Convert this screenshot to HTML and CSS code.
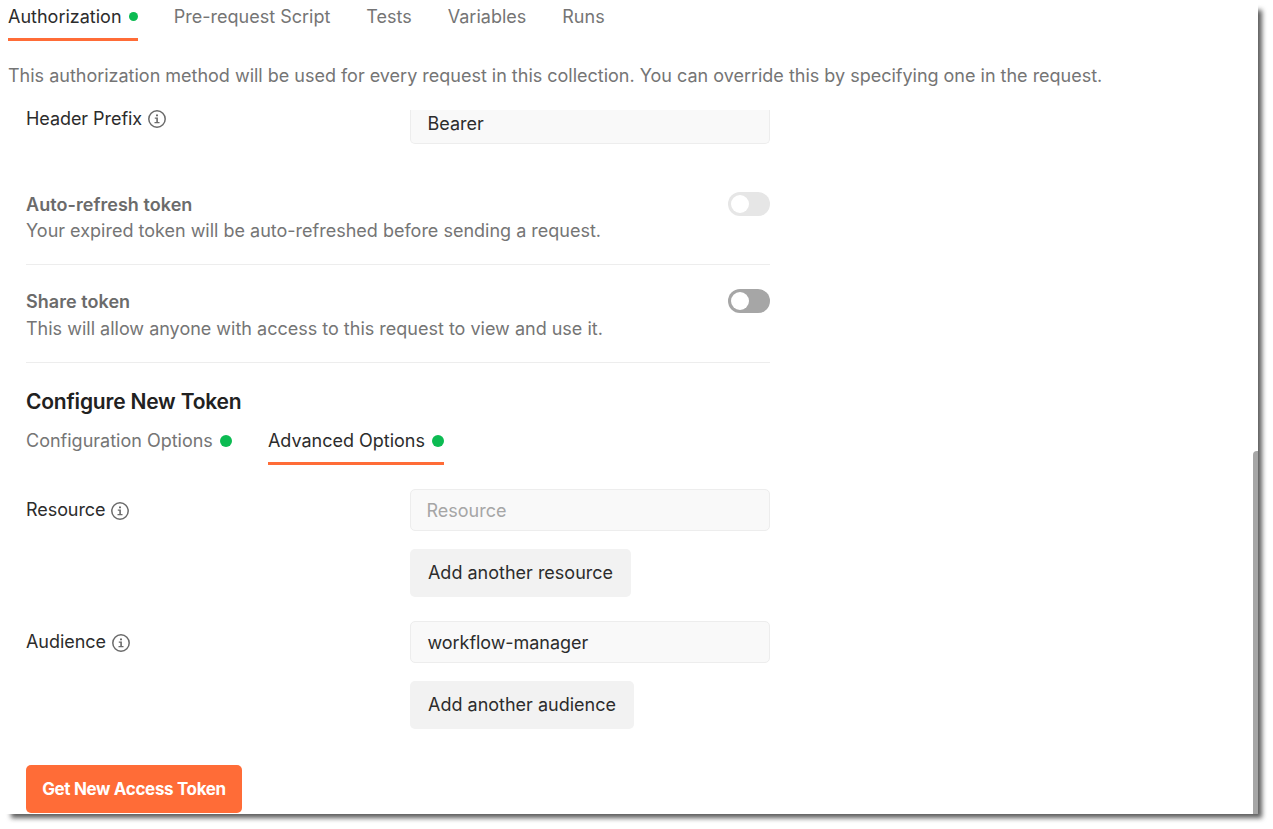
FILE: index.html
```html
<!DOCTYPE html>
<html lang="en">
<head>
<meta charset="utf-8">
<title>Authorization</title>
<link rel="stylesheet" href="styles.css">
</head>
<body>
<svg width="0" height="0" class="sprite">
  <symbol id="info" viewBox="0 0 18 18">
    <circle cx="9" cy="9" r="8.2" fill="none" stroke="currentColor" stroke-width="1.5"/>
    <path d="M8 4.4h2v1.8H8zM6.8 7.4h3.1v4.5h1.6v1.4H6.5v-1.4h1.8V8.8H6.8z" fill="currentColor"/>
  </symbol>
</svg>
<main class="panel">
  <nav class="tabs">
    <a class="tab active"><span>Authorization</span><i class="dot small"></i></a>
    <a class="tab">Pre-request Script</a>
    <a class="tab">Tests</a>
    <a class="tab">Variables</a>
    <a class="tab">Runs</a>
  </nav>
  <p class="description">This authorization method will be used for every request in this collection. You can override this by specifying one in the request.</p>
  <section class="settings">
    <div class="row prefix">
      <div class="label">Header Prefix<svg class="info"><use href="#info"/></svg></div>
      <div class="input">Bearer</div>
    </div>
    <div class="setting refresh">
      <div><h3>Auto-refresh token</h3><p>Your expired token will be auto-refreshed before sending a request.</p></div>
      <span class="toggle disabled"></span>
    </div>
    <div class="setting share">
      <div><h3>Share token</h3><p>This will allow anyone with access to this request to view and use it.</p></div>
      <span class="toggle"></span>
    </div>
    <h2>Configure New Token</h2>
    <nav class="tabs sub">
      <a class="tab"><span>Configuration Options</span><i class="dot"></i></a>
      <a class="tab active"><span>Advanced Options</span><i class="dot"></i></a>
    </nav>
    <div class="row">
      <div class="label">Resource<svg class="info"><use href="#info"/></svg></div>
      <div class="field"><div class="input placeholder">Resource</div><button class="add">Add another resource</button></div>
    </div>
    <div class="row">
      <div class="label wide">Audience<svg class="info"><use href="#info"/></svg></div>
      <div class="field"><div class="input name">workflow-manager</div><button class="add audience">Add another audience</button></div>
    </div>
    <button class="primary">Get New Access Token</button>
  </section>
  <div class="scrollbar"></div>
</main>
</body>
</html>
```
FILE: styles.css
```css
* { box-sizing: border-box; margin: 0; padding: 0; }
body { height: 829px; overflow: hidden; background: #fff; color: #2c2c2c; font: 18px/26px Inter, sans-serif; }
.sprite { position: absolute; }
.panel { position: relative; z-index: 0; width: 1258px; height: 814px; }
.panel::before { content: ""; position: absolute; z-index: -2; inset: 10px -4px -4px 11px; background: #5c5c5c; filter: blur(2.4px); }
.panel::after { content: ""; position: absolute; z-index: -1; inset: 0; background: #fff; }
.tabs { display: flex; gap: 36px; height: 41px; padding-left: 8px; }
.tab { display: flex; align-items: center; gap: 7px; padding-bottom: 5px; border-bottom: 3px solid transparent; color: #757575; white-space: nowrap; }
.tab.active { color: #2c2c2c; border-color: #ff6c37; }
.tab.active + .tab { margin-left: 0.3px; }
.dot { width: 12px; height: 12px; border-radius: 50%; background: #0cbb52; }
.dot.small { width: 9px; height: 9px; }
.description { height: 69px; padding: 22px 0 0 8px; color: #757575; letter-spacing: -0.008px; white-space: nowrap; }
.settings { height: 704px; padding-left: 26px; }
.row { display: flex; width: 744px; height: 132px; }
.prefix { height: 34px; }
.label { display: flex; align-items: center; gap: 5px; width: 384px; height: 42px; letter-spacing: -0.06px; }
.label.wide { gap: 6px; }
.prefix .label { gap: 6px; height: 26px; margin-top: -4px; }
.info { width: 18px; height: 18px; margin-top: 2px; color: #6b6b6b; }
.prefix .info { margin-top: 0; }
.input { width: 360px; height: 42px; padding: 8px 16.5px 6px; border: 1px solid #ededed; border-radius: 5px; background: #f9f9f9; }
.prefix .input { height: 34px; padding-top: 1px; border-top: 0; border-radius: 0 0 5px 5px; }
.name { letter-spacing: -0.06px; }
.placeholder { padding-left: 15.5px; color: #a6a6a6; }
.add { display: block; width: 221px; height: 48px; margin-top: 18px; border: 0; border-radius: 5px; background: #f2f2f2; color: inherit; font: inherit; }
.add.audience { width: 224px; }
.setting { display: flex; justify-content: space-between; width: 744px; border-bottom: 1px solid #ededed; color: #757575; }
.refresh { height: 121px; padding-top: 48px; }
.share { height: 98px; padding-top: 24px; }
.setting h3 { color: #6b6b6b; font-size: 18px; font-weight: 600; letter-spacing: 0.05px; }
.share h3 { margin-bottom: 1px; }
.toggle { width: 42px; height: 24px; padding: 3px; border-radius: 12px; background: #a6a6a6; }
.toggle::before { content: ""; display: block; width: 18px; height: 18px; border-radius: 50%; background: #fff; }
.toggle.disabled { background: #e6e6e6; }
h2 { padding-top: 24px; height: 61px; color: #212121; font-size: 21px; line-height: 30px; font-weight: 600; letter-spacing: -0.2px; }
.sub { padding: 0; height: 41px; margin-bottom: 24px; }
.sub .tab { padding-bottom: 4px; }
.primary { display: block; width: 216px; height: 48px; margin-top: 12px; border: 0; border-radius: 5px; background: #ff6c37; color: #fff; font: 700 17px Inter, sans-serif; letter-spacing: -0.35px; white-space: nowrap; }
.scrollbar { position: absolute; right: 0; bottom: 0; width: 5px; height: 363px; border-top-left-radius: 4px; background: #a6a6a6; }
```
